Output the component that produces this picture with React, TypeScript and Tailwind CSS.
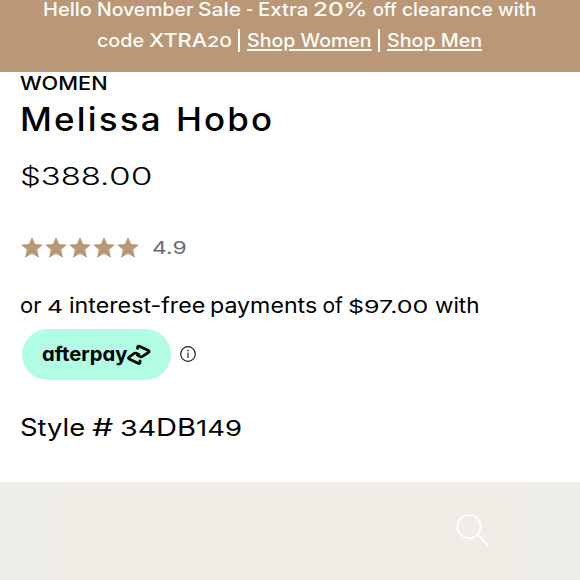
import { useLayoutEffect, useRef, useState } from "react";

type WordProps = {
  w: number;
  className?: string;
  children: string;
};

// Sets a word to a given width, the way an extended typeface would.
function Word({ w, className = "", children }: WordProps) {
  const ref = useRef<HTMLSpanElement>(null);
  const [scale, setScale] = useState(1);

  useLayoutEffect(() => {
    if (ref.current) setScale(w / ref.current.offsetWidth);
  }, [w, children]);

  return (
    <span className={`inline-block shrink-0 ${className}`} style={{ width: w }}>
      <span
        ref={ref}
        className="inline-block origin-left whitespace-pre [text-decoration:inherit]"
        style={{ transform: `scaleX(${scale})` }}
      >
        {children}
      </span>
    </span>
  );
}

function Star() {
  return (
    <svg viewBox="0 0 22 21" className="h-[21px] w-[22px] fill-[#b99877]">
      <path d="M11 0l3.200 7.100 7.700.600-5.700 5.100 1.900 7.900L11 16.800l-7.100 3.900 1.900-7.900L.1 7.700l7.700-.600z" />
    </svg>
  );
}

function AfterpayMark() {
  return (
    <svg
      viewBox="0 0 24 24"
      className="size-[24px] fill-none stroke-black stroke-[2.700]"
      strokeLinejoin="round"
    >
      <path d="M10.600 6.600V4.500q0-2 1.900-1.200l8.900 4.200q1.500.9 0 2l-6 3.900q-1.500.8-2.800 0l-3-1.900" />
      <path d="M13 16.800v2.300q0 2-1.900 1.200L2.200 16q-1.500-.9 0-2l5-3.600q1.300-.8 2.600 0l3 1.800" />
    </svg>
  );
}

function Divider() {
  return <span className="h-[23px] w-[2px] translate-y-[5px] bg-[#fffdf7]" />;
}

function PromoBanner() {
  return (
    <div className="h-[71.600px] overflow-hidden bg-[#b99777] text-[18px] leading-[31px] font-medium text-[#fffdf7]">
      <div className="-mt-[6px] flex items-baseline gap-[5px] pl-[43px]">
        <Word w={49}>Hello</Word>
        <Word w={96}>November</Word>
        <Word w={43}>Sale</Word>
        <Word w={7}>-</Word>
        <Word w={50}>Extra</Word>
        <Word w={55}>20%</Word>
        <Word w={24}>off</Word>
        <Word w={91}>clearance</Word>
        <Word w={38}>with</Word>
      </div>
      <div className="-mt-px flex items-baseline pl-[97px]">
        <Word w={47}>code</Word>
        <Word w={58} className="ml-[5px]">XTRA</Word>
        <Word w={25} className="text-[15px]">20</Word>
        <span className="w-[5.500px]" />
        <Divider />
        <a className="ml-[7px]">
          <Word w={125} className="underline decoration-[1.500px] underline-offset-[2px]">
            Shop Women
          </Word>
        </a>
        <span className="w-[6px]" />
        <Divider />
        <a className="ml-[7px]">
          <Word w={95} className="underline decoration-[1.500px] underline-offset-[2px]">
            Shop Men
          </Word>
        </a>
      </div>
    </div>
  );
}

function Payments() {
  return (
    <div className="mt-[31px] pl-[19.500px]">
      <div className="flex items-baseline gap-[5.500px] text-[21px] leading-[30px]">
        <Word w={22}>or</Word>
        <Word w={16} className="text-[17px]">4</Word>
        <Word w={136}>interest-free</Word>
        <Word w={107}>payments</Word>
        <Word w={20}>of</Word>
        <Word w={81} className="text-[17px]">$97.00</Word>
        <Word w={45}>with</Word>
      </div>
      <div className="mt-[7.500px] flex items-center">
        <div className="ml-[2.500px] flex h-[51px] w-[149px] items-center rounded-full bg-[#b2fce4] pl-[20px] text-black">
          <Word
            w={85}
            className="-mt-[2px] text-[20px] leading-[30px] font-bold [font-feature-settings:'cv11']"
          >
            afterpay
          </Word>
          <AfterpayMark />
        </div>
        <svg viewBox="0 0 18 18" className="-mt-[2px] ml-[8px] size-[18px] fill-none stroke-[#222] stroke-[1.200]">
          <circle cx="9" cy="9" r="7.300" />
          <path d="M9 7.600v5.500" />
          <path d="M9 4.700v1.500" strokeWidth="1.500" />
        </svg>
      </div>
    </div>
  );
}

export default function App() {
  return (
    <div className="flex h-[580px] w-[580px] flex-col overflow-hidden bg-white font-['Inter',sans-serif] text-black">
      <PromoBanner />

      <div className="flex h-[410px] flex-col pt-[2px]">
        <div className="pl-[20px] text-[19px] leading-[20px] font-medium">
          <Word w={88}>WOMEN</Word>
        </div>
        <h1 className="mt-[6px] flex gap-[13px] pl-[20px] text-[32px] leading-[40px] font-medium tracking-[2px]">
          <Word w={143}>Melissa</Word>
          <Word w={98}>Hobo</Word>
        </h1>
        <div className="mt-[21px] pl-[20px] text-[24px] leading-[32px] font-light">
          <Word w={89}>$388.</Word>
          <Word w={44}>00</Word>
        </div>

        <div className="mt-[43px] flex h-[24px] items-center pl-[20.500px]">
          <div className="flex gap-[2.200px]">
            {[1, 2, 3, 4, 5].map((n) => (
              <Star key={n} />
            ))}
          </div>
          <Word w={35} className="ml-[13px] text-[17px] leading-[24px] text-[#6b6b73]">
            4.9
          </Word>
        </div>

        <Payments />

        <div className="mt-[31.500px] flex items-baseline pl-[19.500px] text-[24px] leading-[32px]">
          <Word w={65}>Style</Word>
          <Word w={21} className="ml-[7px]">#</Word>
          <Word w={36} className="ml-[7px] text-[21.500px]">34</Word>
          <Word w={40}>DB</Word>
          <Word w={46} className="text-[21.500px]">149</Word>
        </div>
      </div>

      <div className="flex flex-1 bg-[#edece7] px-[59px]">
        <div className="flex flex-1 justify-end bg-[#f0ede6] pt-[31px] pr-[31.500px]">
          <svg viewBox="0 0 36 36" className="size-[36px] fill-none stroke-white stroke-[1.700]">
            <circle cx="15" cy="13.500" r="11.500" />
            <path d="M23.500 21.500l11 11.500" />
          </svg>
        </div>
      </div>
    </div>
  );
}
